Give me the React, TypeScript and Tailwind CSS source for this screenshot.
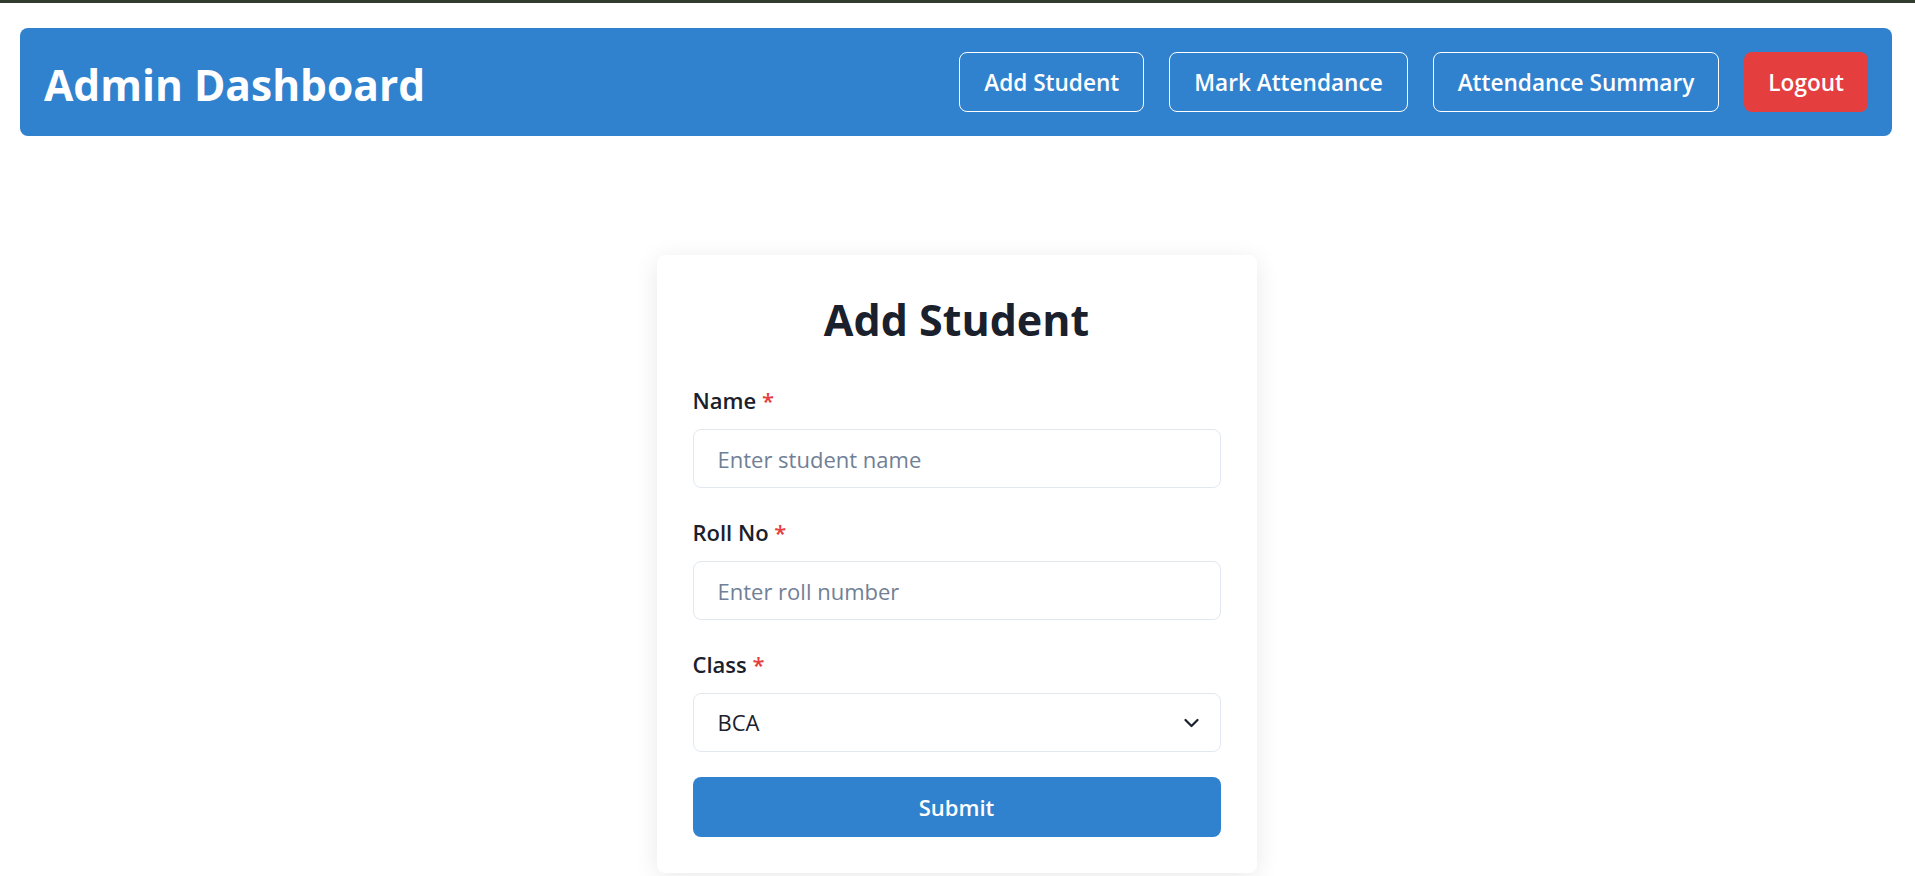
import React from "react";

function Field({ label, children }: { label: string; children: React.ReactNode }) {
  return (
    <div className="flex flex-col">
      <label className="text-[22px] leading-[30px] font-semibold text-[#1a202c] mb-[14px]">
        {label} <span className="text-[#e53e3e]">*</span>
      </label>
      {children}
    </div>
  );
}

export default function App() {
  return (
    <div
      className="min-h-[876px] bg-white"
      style={{ fontFamily: '"Open Sans", "Noto Sans", Arial, sans-serif' }}
    >
      <div className="h-[3px] bg-[#323c2e]" />
      <header className="mt-[25px] ml-5 mr-[23px] h-[108px] rounded-lg bg-[#3182ce] px-6 flex items-center justify-between">
        <h1 className="text-[42.5px] leading-[58px] font-bold text-white mt-[5px]">Admin Dashboard</h1>
        <nav className="flex items-center gap-[25px]">
          <button className="h-[60px] px-6 pt-[2px] rounded-lg border border-white text-white text-[22.6px] font-semibold leading-[30px]">
            Add Student
          </button>
          <button className="h-[60px] px-6 pt-[2px] rounded-lg border border-white text-white text-[22.6px] font-semibold leading-[30px]">
            Mark Attendance
          </button>
          <button className="h-[60px] px-6 pt-[2px] rounded-lg border border-white text-white text-[22.6px] font-semibold leading-[30px]">
            Attendance Summary
          </button>
          <button className="h-[60px] px-6 pt-[2px] rounded-lg bg-[#e53e3e] text-white text-[22.6px] font-semibold leading-[30px]">
            Logout
          </button>
        </nav>
      </header>

      <main className="flex justify-center mt-[119px] pr-[2px]">
        <div className="w-[600px] bg-white rounded-lg p-9 shadow-[0_4px_24px_rgba(0,0,0,0.09)]">
          <h2 className="text-center text-[43px] leading-[58px] font-bold text-[#1a202c] mb-9">Add Student</h2>
          <form className="flex flex-col" onSubmit={(e) => e.preventDefault()}>
            <div className="flex flex-col gap-[29px]">
              <Field label="Name">
                <input
                  type="text"
                  placeholder="Enter student name"
                  className="h-[59px] w-full rounded-lg border border-[#e2e8f0] px-6 text-[22px] text-[#1a202c] placeholder:text-[#718096] outline-none"
                />
              </Field>
              <Field label="Roll No">
                <input
                  type="text"
                  placeholder="Enter roll number"
                  className="h-[59px] w-full rounded-lg border border-[#e2e8f0] px-6 text-[22px] text-[#1a202c] placeholder:text-[#718096] outline-none"
                />
              </Field>
              <Field label="Class">
                <div className="relative">
                  <select
                    defaultValue="BCA"
                    className="h-[59px] w-full appearance-none rounded-lg border border-[#e2e8f0] bg-white px-6 text-[22px] text-[#1a202c] outline-none"
                  >
                    <option>BCA</option>
                    <option>BBA</option>
                    <option>MCA</option>
                  </select>
                  <svg
                    className="pointer-events-none absolute right-[22px] top-1/2 -translate-y-1/2"
                    width="15"
                    height="10"
                    viewBox="0 0 15 10"
                    fill="none"
                  >
                    <path d="M1.5 2L7.5 8L13.5 2" stroke="#1a202c" strokeWidth="2.2" strokeLinecap="round" strokeLinejoin="round" />
                  </svg>
                </div>
              </Field>
            </div>
            <button
              type="submit"
              className="mt-[25px] h-[60px] w-full rounded-lg bg-[#3182ce] text-white text-[22px] font-semibold"
            >
              Submit
            </button>
          </form>
        </div>
      </main>
    </div>
  );
}
